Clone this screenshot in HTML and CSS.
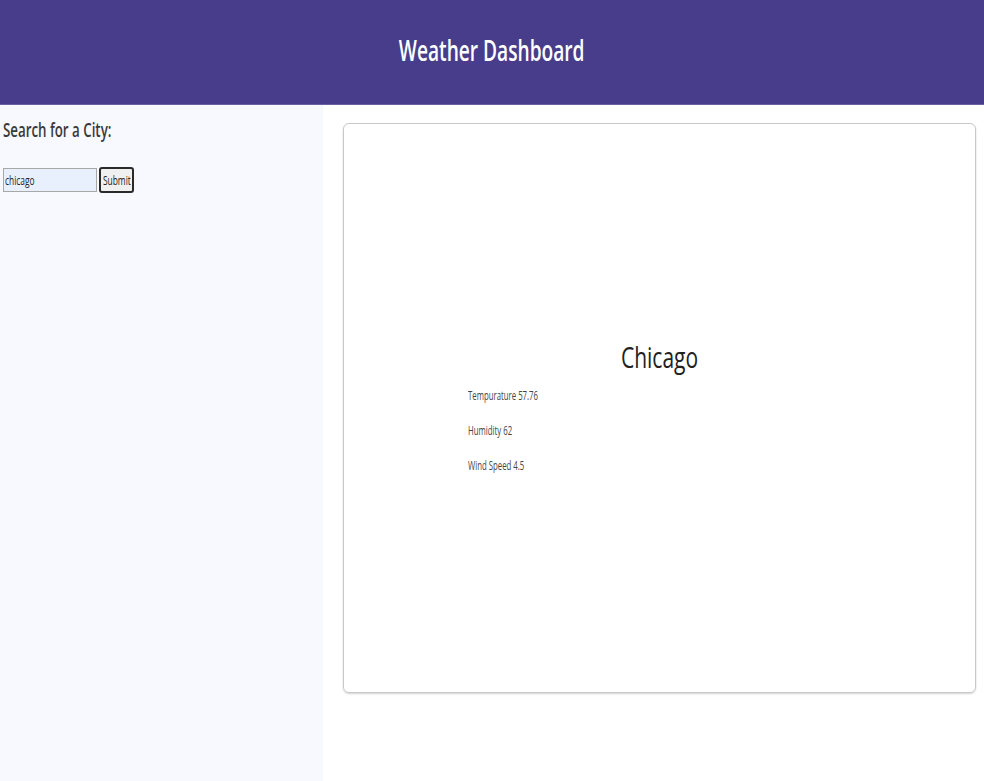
FILE: index.html
```html
<!DOCTYPE html>
<html lang="en">
<head>
<meta charset="utf-8">
<title>Weather Dashboard</title>
<link rel="stylesheet" href="styles.css">
</head>
<body>
<header class="app-header">
  <h1 class="squeeze squeeze-center">Weather Dashboard</h1>
</header>
<div class="layout">
  <aside class="sidebar">
    <h2 class="search-title squeeze">Search for a City:</h2>
    <form class="search-form">
      <div class="city-input"><span class="squeeze">chicago</span></div>
      <button type="button" class="submit-btn"><span class="squeeze squeeze-center">Submit</span></button>
    </form>
  </aside>
  <main class="content">
    <section class="card">
      <h2 class="city-name squeeze squeeze-center">Chicago</h2>
      <div class="stats">
        <p class="stat"><span class="squeeze squeeze-narrow">Tempurature 57.76</span></p>
        <p class="stat"><span class="squeeze squeeze-narrow">Humidity 62</span></p>
        <p class="stat"><span class="squeeze squeeze-narrow">Wind Speed 4.5</span></p>
      </div>
    </section>
  </main>
</div>
</body>
</html>
```

FILE: styles.css
```css
html, body {
  margin: 0;
  padding: 0;
  height: 100%;
}

body {
  font-family: "Open Sans", "Liberation Sans", sans-serif;
  background: #ffffff;
  overflow: hidden;
}

.squeeze {
  display: inline-block;
  transform: scaleX(0.7);
  transform-origin: left center;
  white-space: nowrap;
}

.squeeze-center {
  transform-origin: center center;
}

.squeeze-narrow {
  transform: scaleX(0.6);
}

.app-header {
  height: 104px;
  background: #483d8b;
  border-bottom: 1px solid #6a61a3;
  display: flex;
  align-items: center;
  justify-content: center;
}

.app-header h1 {
  margin: 0 0 6px 0;
  color: #ffffff;
  font-size: 29px;
  font-weight: 600;
  transform: scaleX(0.66);
}

.layout {
  display: grid;
  grid-template-columns: 323px 1fr;
  height: 676px;
}

.sidebar {
  background: #f8f8ff;
  padding: 11px 0 0 3px;
}

.search-title {
  margin: 0;
  font-size: 20px;
  font-weight: 600;
  color: #3a3a3a;
  transform: scaleX(0.665);
}

.search-form {
  display: flex;
  align-items: center;
  gap: 2px;
  margin-top: 24px;
}

.city-input {
  width: 91px;
  height: 22px;
  background: #e8f0fe;
  border: 1px solid #a8a8a8;
  display: flex;
  align-items: center;
  padding-left: 1px;
  font-size: 12px;
  color: #222;
  box-sizing: content-box;
}

.submit-btn {
  width: 35px;
  height: 26px;
  padding: 0;
  background: #f0f0f0;
  border: 2px solid #2a2a2a;
  border-radius: 3px;
  font-family: inherit;
  font-size: 12px;
  color: #222;
  display: flex;
  align-items: center;
  justify-content: center;
}

.content {
  padding: 18px 8px 0 20px;
}

.card {
  border: 1px solid #c8c8c8;
  border-radius: 6px;
  box-shadow: 0 1px 2px rgba(0, 0, 0, 0.18);
  padding-top: 212px;
  box-sizing: content-box;
  display: flex;
  flex-direction: column;
  height: 356px;
}

.city-name {
  margin: 0;
  text-align: center;
  font-size: 30px;
  font-weight: 400;
  color: #222222;
}

.stats {
  padding-left: 124px;
  margin-top: 9px;
}

.stat {
  margin: 0;
  height: 35px;
  font-size: 13px;
  color: #444444;
}
```
